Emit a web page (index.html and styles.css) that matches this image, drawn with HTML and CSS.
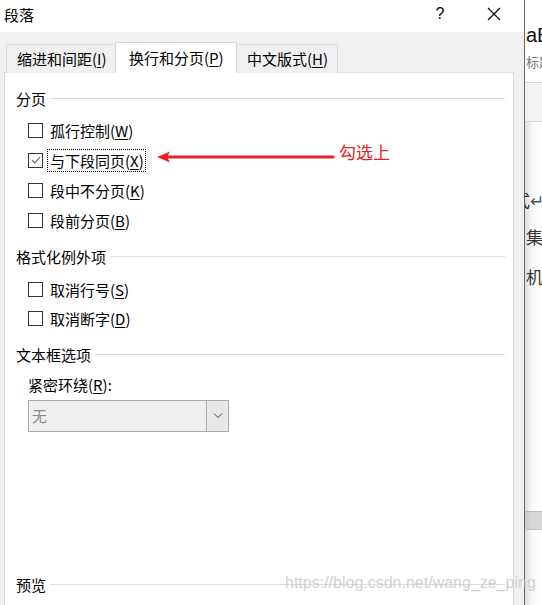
FILE: index.html
```html
<!DOCTYPE html>
<html lang="zh">
<head>
<meta charset="utf-8">
<title>段落</title>
<link rel="stylesheet" href="styles.css">
</head>
<body>
<div class="screen">
  <div class="dialog">
    <div class="titlebar">
      <span class="title">段落</span>
      <span class="help">?</span>
      <span class="close"><svg width="14" height="14" viewBox="0 0 14 14"><path d="M1 1 L13 13 M13 1 L1 13" stroke="#000" stroke-width="1.1" fill="none"/></svg></span>
    </div>
    <div class="body">
      <div class="tabs">
        <div class="tab">缩进和间距(<u>I</u>)</div>
        <div class="tab active">换行和分页(<u>P</u>)</div>
        <div class="tab">中文版式(<u>H</u>)</div>
      </div>
      <div class="panel">
        <div class="heading h1">分页</div>
        <div class="rows r1">
          <div class="row"><span class="box"></span><span class="label">孤行控制(<u>W</u>)</span></div>
          <div class="row"><span class="box checked"><svg width="12" height="12" viewBox="0 0 12 12"><path d="M2 6.2 L4.8 9 L10.2 3" stroke="#555" stroke-width="1.1" fill="none"/></svg></span><span class="label focus">与下段同页(<u>X</u>)</span></div>
          <div class="row"><span class="box"></span><span class="label">段中不分页(<u>K</u>)</span></div>
          <div class="row"><span class="box"></span><span class="label">段前分页(<u>B</u>)</span></div>
        </div>
        <div class="heading h2">格式化例外项</div>
        <div class="rows r2">
          <div class="row"><span class="box"></span><span class="label">取消行号(<u>S</u>)</span></div>
          <div class="row"><span class="box"></span><span class="label">取消断字(<u>D</u>)</span></div>
        </div>
        <div class="heading h3">文本框选项</div>
        <div class="field-label">紧密环绕(<u>R</u>):</div>
        <div class="select">
          <span class="select-value">无</span>
          <span class="select-btn"><svg width="10" height="6" viewBox="0 0 10 6"><path d="M1 0.5 L5 4.5 L9 0.5" stroke="#444" stroke-width="1" fill="none"/></svg></span>
        </div>
        <div class="heading h4">预览</div>
      </div>
    </div>
  </div>
  <div class="edge"></div>
  <div class="behind">
    <div class="bh-top">
      <div class="bh-ab">aB</div>
      <div class="bh-style">标题</div>
    </div>
    <div class="bh-band"></div>
    <div class="bh-doc">
      <div class="bh-line l1"><span class="cut">式</span>↵</div>
      <div class="bh-line l2">集</div>
      <div class="bh-line l3">机</div>
      <div class="bh-bar"></div>
    </div>
  </div>
  <div class="annot">
    <svg class="arrow" width="182" height="14" viewBox="0 0 182 14"><path d="M10 7 L176 7" stroke="#e8202a" stroke-width="3" stroke-linecap="round"/><path d="M0 7 L13 1.5 L10 7 L13 12.5 Z" fill="#e8202a"/></svg>
    <span class="annot-text">勾选上</span>
  </div>
  <div class="watermark">https://blog.csdn.net/wang_ze_ping</div>
</div>
</body>
</html>
```
FILE: styles.css
```css
* { box-sizing: border-box; }
html, body { margin: 0; padding: 0; }
body {
  width: 542px;
  height: 605px;
  overflow: hidden;
  background: #fff;
  font-family: "Noto Sans CJK SC", "Microsoft YaHei", sans-serif;
  font-size: 15px;
  color: #000;
}
u { text-decoration: underline; text-underline-offset: 2px; text-decoration-thickness: 1px; }
.screen {
  position: relative;
  display: flex;
  width: 542px;
  height: 605px;
}
.dialog {
  width: 524px;
  display: flex;
  flex-direction: column;
  height: 605px;
}
.titlebar {
  height: 32px;
  background: #fff;
  display: flex;
  align-items: center;
  padding-left: 4px;
  line-height: 20px;
}
.title { flex: 1; margin-top: -3px; }
.help { width: 20px; text-align: center; margin-right: 37px; margin-top: -4px; font-family: "Liberation Sans", sans-serif; font-size: 16px; }
.close { width: 14px; height: 14px; margin-right: 23px; margin-top: -4px; display: flex; }
.body {
  flex: 1;
  background: #f0f0f0;
  display: flex;
  flex-direction: column;
  padding: 11px 10px 0 4px;
}
.tabs {
  display: flex;
  align-items: flex-end;
  padding-left: 2px;
  height: 30px;
  position: relative;
  z-index: 1;
  margin-bottom: -1px;
}
.tab {
  height: 29px;
  border: 1px solid #d9d9d9;
  border-bottom: none;
  background: #f0f0f0;
  padding: 0 10px;
  display: flex;
  align-items: center;
  line-height: 20px;
  white-space: nowrap;
}
.tab:first-child { width: 110px; padding-left: 10px; }
.tab.active {
  height: 31px;
  width: 122px;
  background: #fff;
  border-left: 1px solid #d9d9d9;
  border-right: 1px solid #d9d9d9;
  padding-left: 13px;
  margin-left: -1px;
  padding-bottom: 1px;
}
.tab:last-child { width: 102px; margin-left: -1px; padding-left: 10px; }
.panel {
  flex: 1;
  background: #fff;
  border: 1px solid #d9d9d9;
  border-bottom: none;
  display: flex;
  flex-direction: column;
  padding: 16px 8px 10px 11px;
}
.heading {
  display: flex;
  align-items: center;
  line-height: 20px;
  height: 20px;
}
.heading::after {
  content: "";
  flex: 1;
  height: 1px;
  background: #dcdcdc;
  margin-left: 4px;
  margin-top: -2px;
}
.rows { padding-left: 12px; }
.r1 { margin-top: 6px; }
.row {
  height: 30px;
  display: flex;
  align-items: center;
}
.r2 { margin-top: 8px; }
.r2 .row { height: 29px; }
.box {
  width: 15px;
  height: 15px;
  border: 1px solid #333;
  background: #fff;
  margin-right: 4px;
  display: flex;
  align-items: center;
  justify-content: center;
}
.box.checked { border-color: #333; }
.label {
  line-height: 21px;
  padding: 0 1px 0 2px;
  border: 1px dotted transparent;
}
.label.focus { border-color: #000; }
.h2 { margin-top: 12px; }
.h3 { margin-top: 12px; }
.field-label {
  margin-top: 10px;
  padding-left: 12px;
  line-height: 20px;
}
.select {
  margin-top: 5px;
  margin-left: 12px;
  width: 201px;
  height: 32px;
  border: 1px solid #adadad;
  background: #efefef;
  display: flex;
}
.select-value {
  flex: 1;
  color: #8a8a8a;
  padding-left: 3px;
  line-height: 30px;
}
.select-btn {
  width: 22px;
  border-left: 1px solid #adadad;
  background: #e8e8e8;
  display: flex;
  align-items: center;
  justify-content: center;
}
.h4 { margin-top: auto; }
.edge {
  width: 1px;
  background: #666;
}
.behind {
  flex: 1;
  display: flex;
  flex-direction: column;
  overflow: hidden;
  background: #fff;
}
.bh-top {
  height: 82px;
  padding-top: 22px;
  padding-left: 1px;
}
.bh-ab {
  font-family: "Liberation Sans", sans-serif;
  font-size: 20px;
  line-height: 26px;
  color: #111;
  white-space: nowrap;
}
.bh-style {
  margin-top: 6px;
  font-size: 13px;
  color: #777;
  line-height: 16px;
  white-space: nowrap;
}
.bh-band {
  height: 40px;
  background: #f2f2f2;
  border-top: 1px solid #d6d6d6;
  border-bottom: 1px solid #d6d6d6;
}
.bh-doc {
  flex: 1;
  background: linear-gradient(to right, #dcdcdc, #f6f6f6 6px, #fff 14px);
  padding-top: 68px;
  color: #333;
}
.bh-line {
  font-size: 17px;
  line-height: 20px;
  white-space: nowrap;
}
.bh-line.l1 { margin-left: -12px; color: #555; }
.cut { color: #222; }
.bh-line.l2 { margin-top: 17px; margin-left: 1px; }
.bh-line.l3 { margin-top: 20px; margin-left: 1px; }
.bh-bar {
  margin-top: 224px;
  height: 19px;
  background: linear-gradient(to right, #c8c8c8, #d6d6d6 6px, #d8d8d8);
  border-top: 1px solid #bbb;
  border-bottom: 1px solid #c4c4c4;
}
.annot {
  position: absolute;
  left: 157px;
  top: 140px;
  display: flex;
  align-items: center;
}
.arrow { margin-top: 10px; }
.annot-text {
  margin-left: 0;
  color: #e8202a;
  font-size: 17px;
  line-height: 24px;
}
.watermark {
  position: absolute;
  left: 285px;
  top: 574px;
  font-family: "Liberation Sans", sans-serif;
  font-size: 16px;
  color: rgba(200, 200, 200, 0.85);
  white-space: nowrap;
}
```
